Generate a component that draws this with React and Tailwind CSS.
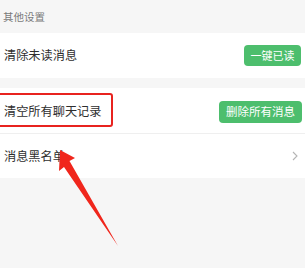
export default function App() {
  const font = { fontFamily: '"Noto Sans CJK SC", "Noto Sans", sans-serif' };
  return (
    <div className="relative w-[305px] h-[268px] bg-[#f6f6f6] overflow-hidden" style={font}>
      <div className="h-[33px] flex items-center pl-[3px] text-[10.5px] text-[#7a7a7a]">其他设置</div>
      <div className="h-[45px] bg-white flex items-center justify-between pl-[4px] pr-[4px]">
        <span className="text-[12.2px] text-[#2e2e2e]">清除未读消息</span>
        <span className="h-[21px] w-[57px] flex items-center justify-center rounded-[4px] bg-[#4dbe6d] text-white text-[11px]">一键已读</span>
      </div>
      <div className="h-[10px]" />
      <div className="relative h-[46px] bg-white flex items-center justify-between pl-[4px] pr-[3px] border-b border-[#efefef]">
        <span className="text-[12.2px] text-[#2e2e2e] pt-[2px]">清空所有聊天记录</span>
        <span className="h-[22px] w-[83px] flex items-center justify-center rounded-[4px] bg-[#4dbe6d] text-white text-[11.5px] mt-[2px]">删除所有消息</span>
        <div className="absolute left-[-3px] top-[5px] w-[116px] h-[34px] border-[2px] border-[#e8231f] rounded-[3px]" />
      </div>
      <div className="h-[44px] bg-white flex items-center justify-between pl-[4px] pr-[7px]">
        <span className="text-[12.2px] text-[#2e2e2e]">消息黑名单</span>
        <svg width="6" height="10" viewBox="0 0 6 10" fill="none">
          <path d="M1 1l4 4-4 4" stroke="#b5b5b5" strokeWidth="1.1" />
        </svg>
      </div>
      <svg className="absolute left-0 top-0" width="305" height="268" viewBox="0 0 305 268">
        <polygon points="60,150 75,158 69.5,161 118,246 64,167 59,171" fill="#f0261c" />
      </svg>
    </div>
  );
}
